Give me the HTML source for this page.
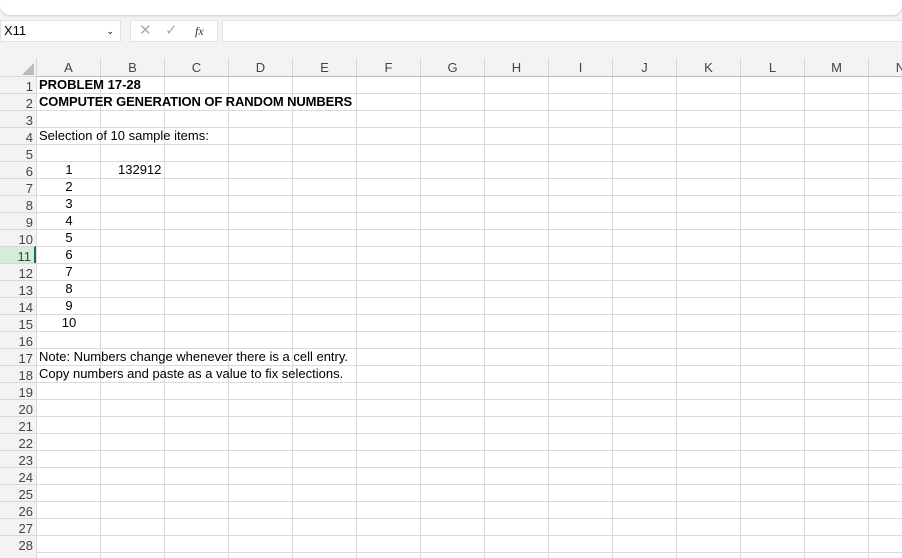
<!DOCTYPE html><html><head><style>
body{margin:0;width:902px;height:557px;overflow:hidden;background:#f3f3f3;font-family:"Liberation Sans",Arial,sans-serif;position:relative}
.rib{position:absolute;left:0;top:-10px;width:902px;height:25px;background:#fff;border-radius:0 0 10px 10px;box-shadow:0 1px 2px #ccc}
.nb{position:absolute;left:0;top:20px;width:121px;height:22px;background:#fff;border:1px solid #e1e1e1;box-sizing:border-box;font-size:13px;line-height:20px;padding-left:3px}
.fx{position:absolute;left:130px;top:20px;width:88px;height:22px;background:#fff;border:1px solid #e1e1e1;box-sizing:border-box;color:#aaa;font-size:15px;line-height:20px}
.fi{position:absolute;left:222px;top:20px;width:690px;height:22px;background:#fff;border:1px solid #e1e1e1;box-sizing:border-box}
.grid{position:absolute;left:0;top:58px}
.ch{position:absolute;top:0;height:18px;font-size:13px;color:#444;text-align:center;line-height:20px;border-left:1px solid #d8d8d8;box-sizing:border-box}
.rh{position:absolute;left:0;width:36px;height:17px;font-size:13px;color:#444;text-align:right;padding-right:3px;box-sizing:border-box;line-height:19px;border-top:1px solid #d8d8d8}
.cells{position:absolute;left:36px;top:18px;width:866px;height:481px;background:#fff;
background-image:linear-gradient(#dadada 1px,transparent 1px),linear-gradient(90deg,#dadada 1px,transparent 1px);background-size:64px 17px;background-position:0 -1px,0 0;border-top:1px solid #bbb}
.t{position:absolute;font-size:13px;line-height:17px;color:#000;white-space:nowrap}
</style></head><body>
<div class="rib"></div>
<div class="nb">X11<span style="position:absolute;right:6px;font-size:9px">&#8964;</span></div>
<div class="fx"><span style="position:absolute;left:8px">✕</span><span style="position:absolute;left:34px">✓</span><span style="position:absolute;left:64px;color:#333;font-style:italic;font-family:'Liberation Serif',serif;font-size:12px">fx</span></div>
<div class="fi"></div>
<div class="grid">
<div style="position:absolute;left:22px;top:5px;width:0;height:0;border-left:12px solid transparent;border-bottom:12px solid #bbb"></div>
<div class="ch" style="left:36px;width:64px">A</div><div class="ch" style="left:100px;width:64px">B</div><div class="ch" style="left:164px;width:64px">C</div><div class="ch" style="left:228px;width:64px">D</div><div class="ch" style="left:292px;width:64px">E</div><div class="ch" style="left:356px;width:64px">F</div><div class="ch" style="left:420px;width:64px">G</div><div class="ch" style="left:484px;width:64px">H</div><div class="ch" style="left:548px;width:64px">I</div><div class="ch" style="left:612px;width:64px">J</div><div class="ch" style="left:676px;width:64px">K</div><div class="ch" style="left:740px;width:64px">L</div><div class="ch" style="left:804px;width:64px">M</div><div class="ch" style="left:868px;width:64px">N</div>
<div class="cells"></div>
</div>
<div style="position:absolute;left:0;top:76px">
<div class="rh" style="top:0">1</div><div class="rh" style="top:17px">2</div><div class="rh" style="top:34px">3</div><div class="rh" style="top:51px">4</div><div class="rh" style="top:68px">5</div><div class="rh" style="top:85px">6</div><div class="rh" style="top:102px">7</div><div class="rh" style="top:119px">8</div><div class="rh" style="top:136px">9</div><div class="rh" style="top:153px">10</div><div class="rh" style="top:170px;background:#d3ecdc;border-right:2px solid #1e7145">11</div><div class="rh" style="top:187px">12</div><div class="rh" style="top:204px">13</div><div class="rh" style="top:221px">14</div><div class="rh" style="top:238px">15</div><div class="rh" style="top:255px">16</div><div class="rh" style="top:272px">17</div><div class="rh" style="top:289px">18</div><div class="rh" style="top:306px">19</div><div class="rh" style="top:323px">20</div><div class="rh" style="top:340px">21</div><div class="rh" style="top:357px">22</div><div class="rh" style="top:374px">23</div><div class="rh" style="top:391px">24</div><div class="rh" style="top:408px">25</div><div class="rh" style="top:425px">26</div><div class="rh" style="top:442px">27</div><div class="rh" style="top:459px">28</div>
<div class="t" style="left:39px;top:0;font-weight:bold;font-size:13px">PROBLEM 17-28</div>
<div class="t" style="left:39px;top:17px;font-weight:bold;font-size:13px;letter-spacing:-0.1px">COMPUTER GENERATION OF RANDOM NUMBERS</div>
<div class="t" style="left:39px;top:51px">Selection of 10 sample items:</div>
<div class="t" style="left:118px;top:85px">132912</div>
<div class="t" style="left:50px;width:38px;text-align:center;top:85px">1</div><div class="t" style="left:50px;width:38px;text-align:center;top:102px">2</div><div class="t" style="left:50px;width:38px;text-align:center;top:119px">3</div><div class="t" style="left:50px;width:38px;text-align:center;top:136px">4</div><div class="t" style="left:50px;width:38px;text-align:center;top:153px">5</div><div class="t" style="left:50px;width:38px;text-align:center;top:170px">6</div><div class="t" style="left:50px;width:38px;text-align:center;top:187px">7</div><div class="t" style="left:50px;width:38px;text-align:center;top:204px">8</div><div class="t" style="left:50px;width:38px;text-align:center;top:221px">9</div><div class="t" style="left:50px;width:38px;text-align:center;top:238px">10</div>
<div class="t" style="left:39px;top:272px">Note: Numbers change whenever there is a cell entry.</div>
<div class="t" style="left:39px;top:289px">Copy numbers and paste as a value to fix selections.</div>
</div>
</body></html>
